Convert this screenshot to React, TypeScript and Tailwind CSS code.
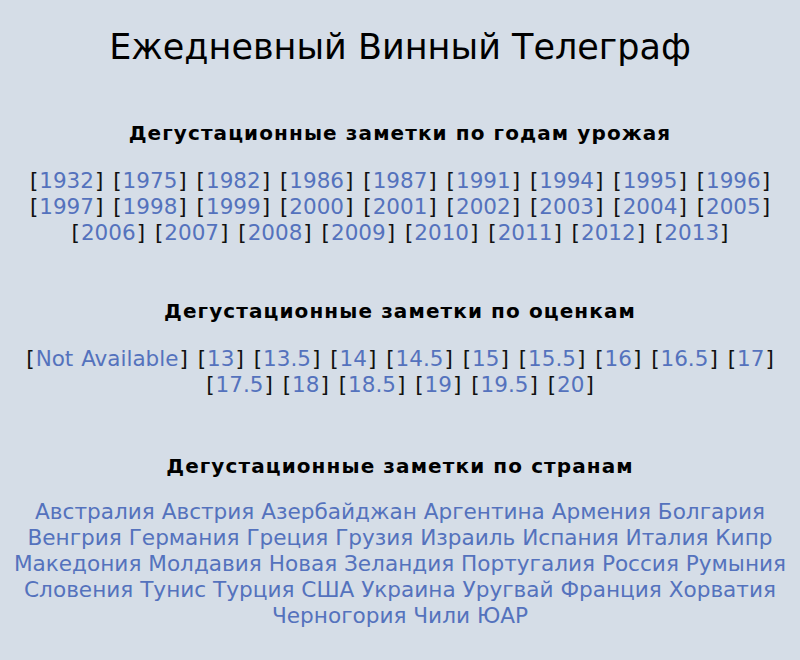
const years = [
  "1932", "1975", "1982", "1986", "1987", "1991", "1994", "1995", "1996",
  "1997", "1998", "1999", "2000", "2001", "2002", "2003", "2004", "2005",
  "2006", "2007", "2008", "2009", "2010", "2011", "2012", "2013",
];

const grades = [
  "Not Available", "13", "13.5", "14", "14.5", "15", "15.5", "16", "16.5",
  "17", "17.5", "18", "18.5", "19", "19.5", "20",
];

const countries = [
  "Австралия", "Австрия", "Азербайджан", "Аргентина", "Армения", "Болгария",
  "Венгрия", "Германия", "Греция", "Грузия", "Израиль", "Испания", "Италия",
  "Кипр", "Македония", "Молдавия", "Новая Зеландия", "Португалия", "Россия",
  "Румыния", "Словения", "Тунис", "Турция", "США", "Украина", "Уругвай",
  "Франция", "Хорватия", "Черногория", "Чили", "ЮАР",
];

function Bracketed({ items }: { items: string[] }) {
  return (
    <p className="text-[21.5px] leading-[26px] text-[#111] [word-spacing:1px]">
      {items.map((it, i) => (
        <span key={it}>
          <span className="px-[1px]">[</span>
          <a href="#" className="text-[#5472bd] no-underline">{it}</a>
          <span className="px-[1px]">]</span>
          {i < items.length - 1 ? " " : ""}
        </span>
      ))}
    </p>
  );
}

function Heading({ children, className }: { children: string; className: string }) {
  return (
    <h2 className={`text-[20px] leading-[24px] font-bold tracking-[1.1px] ${className}`}>
      {children}
    </h2>
  );
}

export default function App() {
  return (
    <div
      className="min-h-[660px] bg-[#d5dde7] px-2 pt-[26px] text-center text-black"
      style={{ fontFamily: '"DejaVu Sans", Verdana, sans-serif' }}
    >
      <h1 className="text-[35px] leading-[42px] font-normal">Ежедневный Винный Телеграф</h1>

      <Heading className="mt-[53px]">Дегустационные заметки по годам урожая</Heading>
      <div className="mt-[23px] px-2">
        <Bracketed items={years} />
      </div>

      <Heading className="mt-[53px]">Дегустационные заметки по оценкам</Heading>
      <div className="mt-[23px] px-2">
        <Bracketed items={grades} />
      </div>

      <Heading className="mt-[56px]">Дегустационные заметки по странам</Heading>
      <p className="mt-[21px] text-[21.6px] leading-[26px]">
        {countries.map((c, i) => (
          <span key={c}>
            <a href="#" className="text-[#5472bd] no-underline">{c}</a>
            {i < countries.length - 1 ? " " : ""}
          </span>
        ))}
      </p>
    </div>
  );
}
